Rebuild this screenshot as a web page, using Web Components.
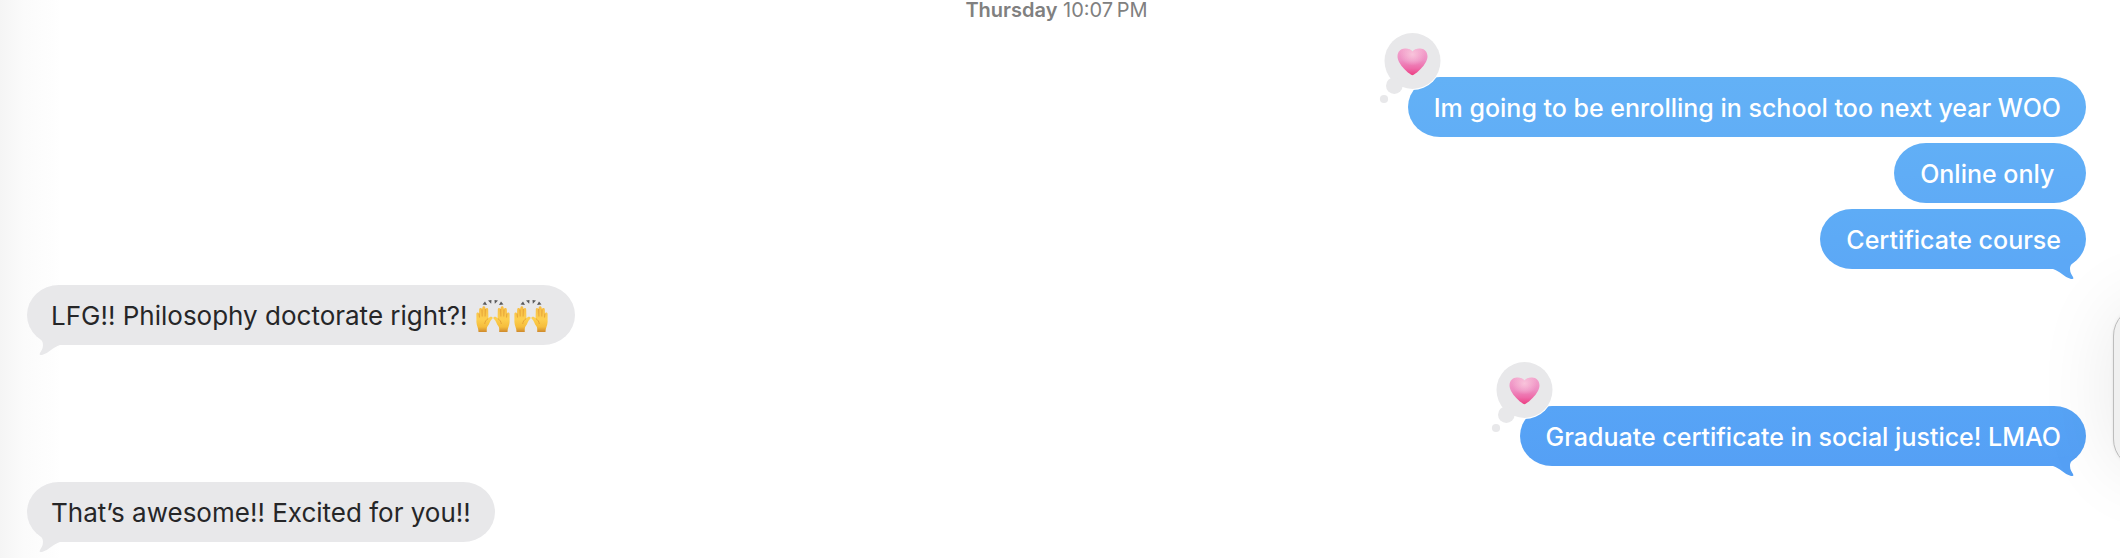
<!DOCTYPE html>
<html lang="en">
<head>
<meta charset="utf-8">
<title>Messages</title>
<style>
  html, body { margin: 0; height: 100%; }
  body { background: #fff; font-family: Inter, "Liberation Sans", sans-serif; overflow: hidden; }
</style>
</head>
<body>
<chat-transcript>
  <time-stamp day="Thursday">10:07&#8239;PM</time-stamp>
  <message-group from="me">
    <message-bubble from="me" tone="1"><heart-tapback slot="reaction"></heart-tapback>Im going to be enrolling in school too next year WOO</message-bubble>
    <message-bubble from="me" tone="2">Online only </message-bubble>
    <message-bubble from="me" tone="3" tail>Certificate course</message-bubble>
  </message-group>
  <message-group from="them">
    <message-bubble from="them" tail>LFG!! Philosophy doctorate right?! <raised-hands></raised-hands><raised-hands></raised-hands></message-bubble>
  </message-group>
  <message-group from="me" reacted>
    <message-bubble from="me" tone="4" tail><heart-tapback slot="reaction"></heart-tapback>Graduate certificate in social justice! LMAO</message-bubble>
  </message-group>
  <message-group from="them">
    <message-bubble from="them" tail>That’s awesome!! Excited for you!!</message-bubble>
  </message-group>
  <edge-panel slot="overlay"></edge-panel>
</chat-transcript>

<script>
  const define = (name, html, setup) => {
    const template = document.createElement('template');
    template.innerHTML = html;
    customElements.define(name, class extends HTMLElement {
      constructor() {
        super();
        this.attachShadow({ mode: 'open' }).append(template.content.cloneNode(true));
      }
      connectedCallback() { if (setup) setup(this, this.shadowRoot); }
    });
  };

  define('chat-transcript', `
    <style>
      :host { display: block; position: relative; min-height: 100vh; overflow: hidden;
        background: linear-gradient(90deg, #f5f5f5, #fbfbfb 24px, #fefefe 54px, #fff 60px); }
      main { display: flex; flex-direction: column; gap: 16px; padding: 0 34px 16px 27px; }
    </style>
    <main><slot></slot></main>
    <slot name="overlay"></slot>`);

  define('time-stamp', `
    <style>
      :host { display: block; text-align: center; color: #808080; font-size: 20px; line-height: 20px; margin-bottom: 41px; }
      b { font-weight: 600; }
    </style>
    <time><b></b> <slot></slot></time>`,
    (el, root) => { root.querySelector('b').textContent = el.getAttribute('day'); });

  define('message-group', `
    <style>
      :host { display: flex; flex-direction: column; gap: 6px; align-items: flex-start; }
      :host([from="me"]) { align-items: flex-end; }
      :host([reacted]) { margin-top: 45px; }
    </style>
    <slot></slot>`);

  define('message-bubble', `
    <style>
      :host { display: block; position: relative; box-sizing: border-box; padding: 0 24px;
        border-radius: 32px / 30px; font-size: 26px; line-height: 62px;
        background: var(--fill); color: #262628; --fill: #e8e8ea; --tail: #e8e8ea; }
      p { margin: 0; height: 60px; white-space: pre; }
      :host([from="me"]) { padding: 0 25px 0 26px; color: #fff; font-size: 25px; font-weight: 500; }
      :host([tone="1"]) { --fill: linear-gradient(#63b1f6, #61aef6); }
      :host([tone="2"]) { --fill: linear-gradient(#61aff6, #5fabf6); }
      :host([tone="3"]) { --fill: linear-gradient(#5eacf6, #5ca8f6); --tail: #5ca8f6; }
      :host([tone="4"]) { --fill: linear-gradient(#57a4f6, #55a0f5); --tail: #55a0f5; }
      .tail { display: none; position: absolute; left: 10px; bottom: -10px; width: 24px; height: 20px; fill: var(--tail); }
      :host([tail]) .tail { display: block; }
      :host([from="me"]) .tail { left: auto; right: 10px; transform: scaleX(-1); }
    </style>
    <svg class="tail" viewBox="0 0 24 20" aria-hidden="true"><path d="M0 1 C3 4 6 5 6 10 C6 14 4 16 3 18 C2 20 3 20 5 20 C12 18 16 12 23 10 L23 2 L0 0Z"/></svg>
    <p><slot></slot></p>
    <slot name="reaction"></slot>`);

  define('heart-tapback', `
    <style>
      :host { display: block; position: absolute; left: -30px; top: -46px; line-height: 0; }
      svg { display: block; width: 66px; height: 76px; }
    </style>
    <svg viewBox="0 0 66 76" role="img" aria-label="Loved">
      <defs>
        <linearGradient id="body" x1="0" y1="0" x2="0" y2="1">
          <stop offset="0" stop-color="#f3a3cc"/><stop offset=".45" stop-color="#ee8fc3"/><stop offset=".75" stop-color="#ee6aa8"/><stop offset="1" stop-color="#ec3f83"/>
        </linearGradient>
        <radialGradient id="shine" cx=".5" cy=".22" r=".42">
          <stop offset="0" stop-color="#f9c6dc" stop-opacity=".95"/><stop offset="1" stop-color="#f9c6dc" stop-opacity="0"/>
        </radialGradient>
      </defs>
      <circle cx="34.5" cy="30" r="29" fill="#fff"/>
      <g fill="#e8e8ea"><circle cx="34.5" cy="30" r="28"/><circle cx="16.3" cy="54.7" r="8.3"/><circle cx="6" cy="68" r="4.1"/></g>
      <path fill="url(#body)" d="M34.5 44.2 C32 44 19.5 33.5 19.5 25.5 C19.5 20.5 22.7 17.5 27 17.5 C30.5 17.5 33 18.7 34.5 20.7 C36 18.7 38.5 17.5 42 17.5 C46.3 17.5 49.5 20.5 49.5 25.5 C49.5 33.5 37 44 34.5 44.2Z"/>
      <path fill="url(#shine)" d="M34.5 44.2 C32 44 19.5 33.5 19.5 25.5 C19.5 20.5 22.7 17.5 27 17.5 C30.5 17.5 33 18.7 34.5 20.7 C36 18.7 38.5 17.5 42 17.5 C46.3 17.5 49.5 20.5 49.5 25.5 C49.5 33.5 37 44 34.5 44.2Z"/>
    </svg>`);

  define('raised-hands', `
    <style>
      :host { display: inline-flex; width: 38px; height: 34px; vertical-align: -8px; line-height: 0; white-space: normal; }
      svg { display: block; width: 38px; height: 34px; }
    </style>
    <svg viewBox="1 0 38 34" role="img" aria-label="Raised hands">
      <defs>
        <linearGradient id="skin" x1="0" y1="0" x2="0" y2="1"><stop offset="0" stop-color="#f6bc45"/><stop offset=".5" stop-color="#fdcf4f"/><stop offset=".8" stop-color="#f5bd3c"/><stop offset="1" stop-color="#cf8a2e"/></linearGradient>
        <g id="hand">
          <path fill="url(#skin)" d="M4.5 33 C4.5 29 2.6 27 2.4 23 L2.4 15 C2.4 13 4.8 13 5 14.8 L5.2 10.5 C5.4 8.5 7.9 8.7 8 10.3 L8.4 8.7 C8.7 6.8 11.2 7 11.3 8.9 L11.8 10 C12.2 8.4 14.4 8.9 14.2 10.7 L14.4 19.6 C15.4 18 16.8 17.4 18 18 C19 18.6 18.7 19.5 17.8 20.2 C15.8 22 15.6 25 13.6 27.2 C12.7 28.2 12.7 30 12.8 33Z"/>
          <path fill="none" stroke="#dd9430" stroke-width=".7" d="M5.1 14.5 L5.5 18.5 M8 10.5 L8.2 17.5 M11.3 10 L11.1 17.5 M14.2 19.5 C12 21 11 22.500 10.700 25"/>
        </g>
      </defs>
      <use href="#hand"/><use href="#hand" transform="translate(38 0) scale(-1 1)"/>
      <g fill="#5a5a5c"><path d="M8.5 5.5 L11 2.5 L13 6Z"/><path d="M14 1.5 L17.5 1 L17.2 4.8Z"/><path d="M24 1.5 L20.5 1 L20.8 4.8Z"/><path d="M29.5 5.5 L27 2.5 L25 6Z"/></g>
    </svg>`);

  define('edge-panel', `
    <style>
      :host { display: block; position: absolute; top: 306px; right: -93px; width: 100px; height: 163px; box-sizing: border-box;
        border-radius: 30px; border: 1px solid #bdbdbd; background: #f0f0f0; box-shadow: 0 0 80px rgba(0, 0, 0, .09), 0 0 3px rgba(0, 0, 0, .08); }
    </style>`);
</script>
</body>
</html>
